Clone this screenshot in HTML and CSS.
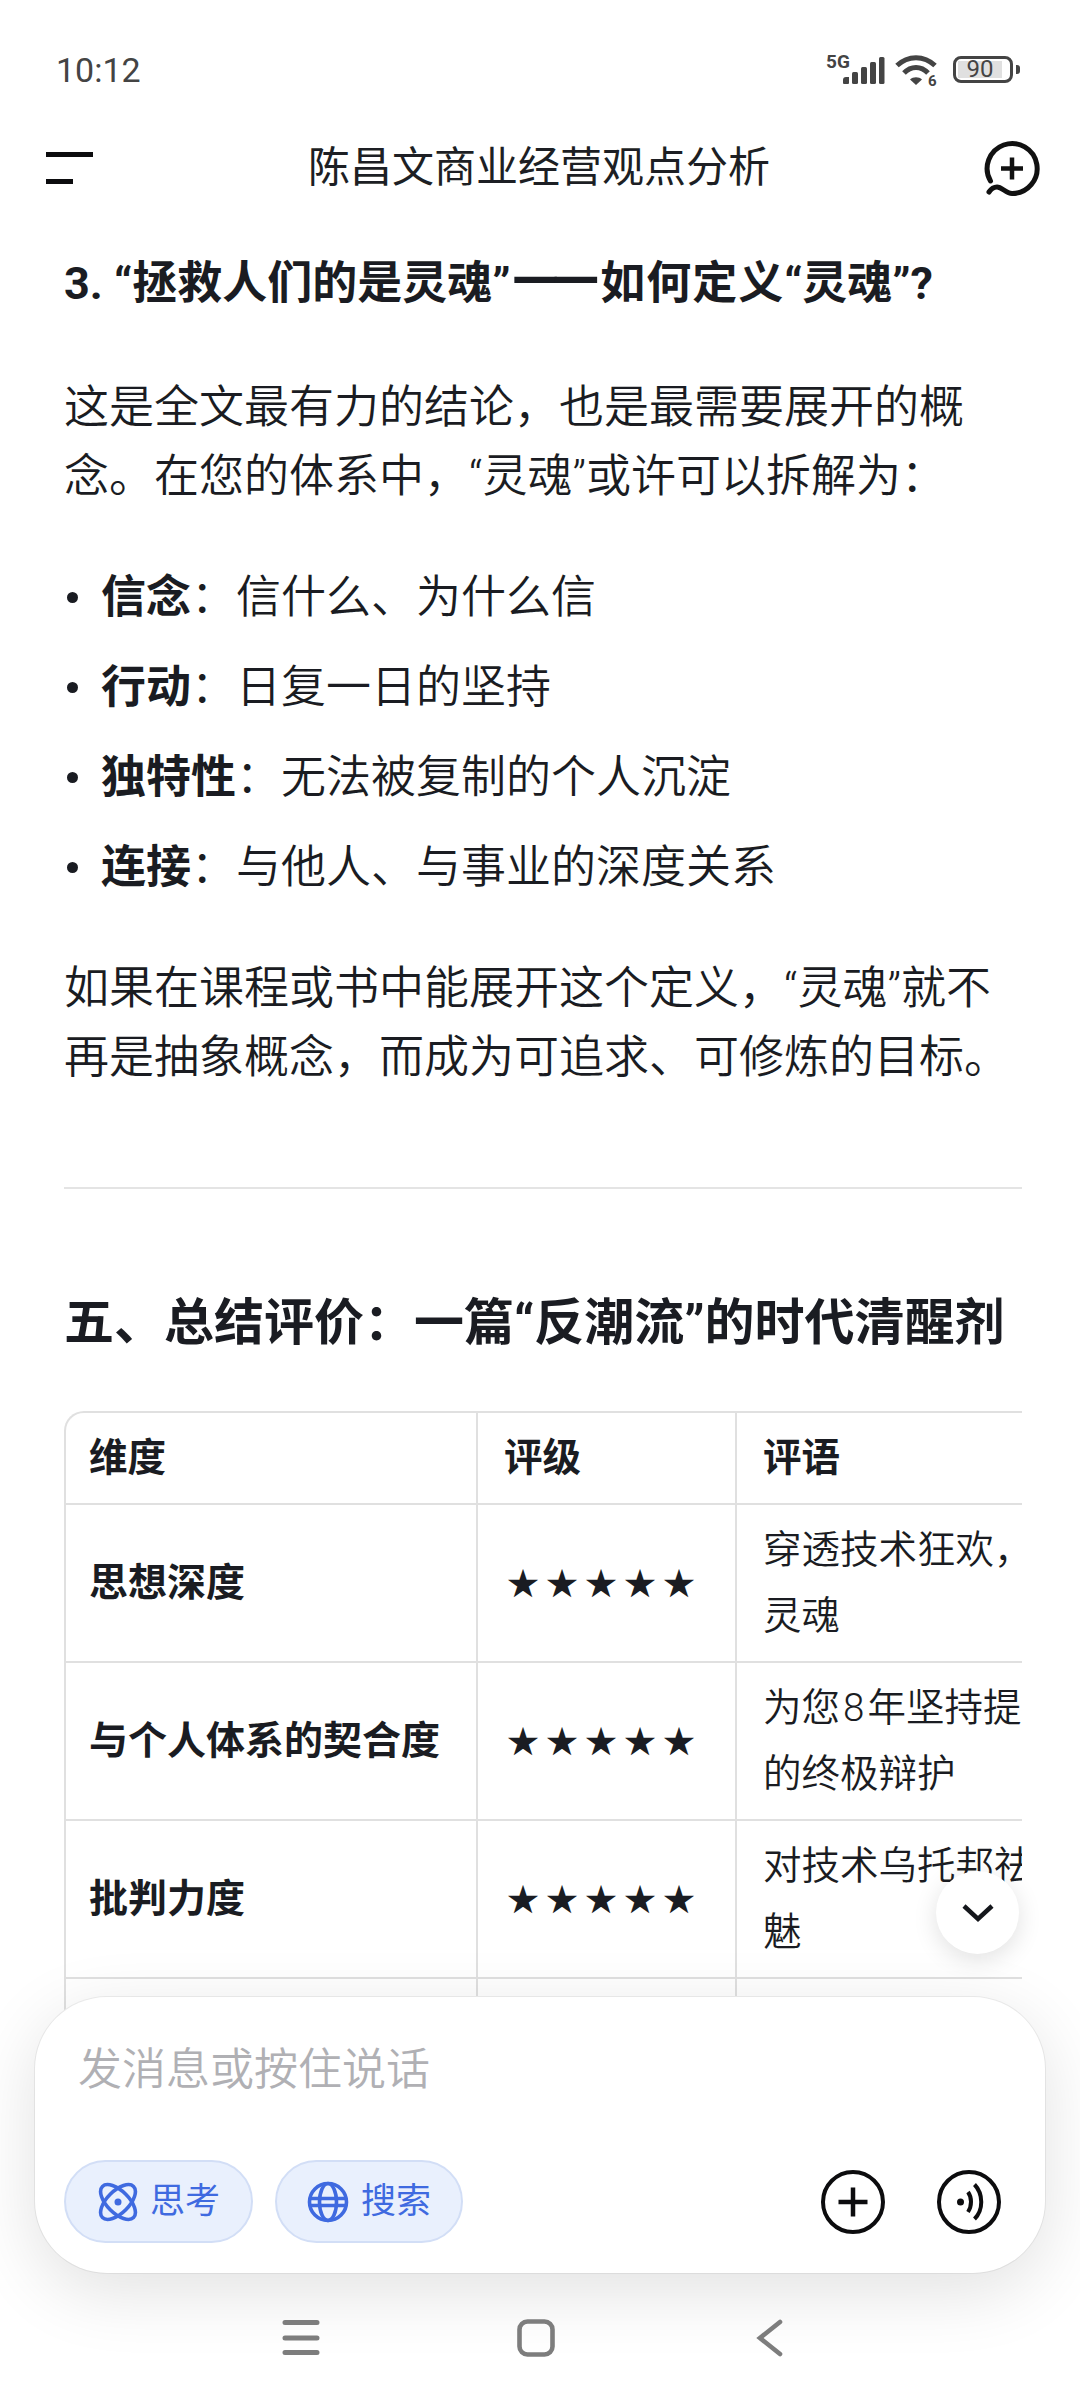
FILE: index.html
```html
<!DOCTYPE html>
<html lang="zh-CN">
<head>
<meta charset="utf-8">
<title>陈昌文商业经营观点分析</title>
<link rel="stylesheet" href="styles.css">
</head>
<body>
<div class="page">
  <div class="status">
    <span class="time">10:12</span>
    <div class="status-icons">
      <svg class="ic-net" width="60" height="34" viewBox="0 0 60 34">
        <text x="0" y="15" class="net-text">5G</text>
        <path d="M17 30l0-3a3 3 0 0 1 3-3h3v6a1 1 0 0 1-1 1h-4a1 1 0 0 1-1-1z" fill="#444"/>
        <rect x="26" y="19" width="6" height="12" rx="1.5" fill="#444"/>
        <rect x="35" y="14" width="6" height="17" rx="1.5" fill="#444"/>
        <rect x="44" y="9" width="6" height="22" rx="1.5" fill="#444"/>
        <rect x="53" y="4" width="5.5" height="27" rx="1.5" fill="#444"/>
      </svg>
      <svg class="ic-wifi" width="44" height="34" viewBox="0 0 44 34">
        <path d="M2 12.5C13 2 29 2 40 12.5" fill="none" stroke="#444" stroke-width="5"/>
        <path d="M9 20C16 12.5 26 12.5 33 20" fill="none" stroke="#444" stroke-width="5"/>
        <path d="M21 32l-6-5.500C18 23.500 24 23.500 27 26.500z" fill="#444"/>
        <text x="33" y="33" class="wifi-text">6</text>
      </svg>
      <div class="battery">
        <div class="battery-body"><span class="battery-fill">90</span></div>
        <span class="battery-nub"></span>
      </div>
    </div>
  </div>

  <header class="topbar">
    <div class="menu"><span class="menu-long"></span><span class="menu-short"></span></div>
    <div class="title">陈昌文商业经营观点分析</div>
    <svg class="newchat" width="60" height="60" viewBox="0 0 60 60">
      <path d="M8.500 43A25 25 0 1 1 30 55.500C24 55.500 20 49 15 49C11 49 9 51 7 54" fill="none" stroke="#111" stroke-width="5" stroke-linecap="round"/>
      <path d="M30 19.500V41.500M19 30.500H41" stroke="#111" stroke-width="4.500" fill="none"/>
    </svg>
  </header>

  <main class="content">
    <h3 class="h3">3. “拯救人们的是灵魂”<span class="dash">——</span><span class="tail">如何定义</span>“灵魂”?</h3>
    <p class="para first">这是全文最有力的结论，也是最需要展开的概念。在您的体系中，“灵魂”或许可以拆解为：</p>
    <ul class="list">
      <li class="item"><b>信念</b>：信什么、为什么信</li>
      <li class="item"><b>行动</b>：日复一日的坚持</li>
      <li class="item"><b>独特性</b>：无法被复制的个人沉淀</li>
      <li class="item"><b>连接</b>：与他人、与事业的深度关系</li>
    </ul>
    <p class="para">如果在课程或书中能展开这个定义，“灵魂”就不再是抽象概念，而成为可追求、可修炼的目标。</p>
    <hr class="rule">
    <h2 class="h2">五、总结评价：一篇“反潮流”的时代清醒剂</h2>
    <div class="table-wrap">
      <table class="table">
        <thead>
          <tr><th class="c1">维度</th><th class="c2">评级</th><th class="c3">评语</th></tr>
        </thead>
        <tbody>
          <tr><td class="c1 strong">思想深度</td><td class="c2 stars">★★★★★</td><td class="c3">穿透技术狂欢，<br>灵魂</td></tr>
          <tr><td class="c1 strong">与个人体系的契合度</td><td class="c2 stars">★★★★★</td><td class="c3">为您<span class="num">8</span>年坚持提<br>的终极辩护</td></tr>
          <tr><td class="c1 strong">批判力度</td><td class="c2 stars">★★★★★</td><td class="c3">对技术乌托邦祛<br>魅</td></tr>
          <tr><td class="c1 strong">&nbsp;</td><td class="c2">&nbsp;</td><td class="c3">&nbsp;<br>&nbsp;</td></tr>
        </tbody>
      </table>
    </div>
  </main>

  <button class="scroll-down" aria-label="向下滚动">
    <svg width="34" height="20" viewBox="0 0 34 20"><path d="M3 3L17 16L31 3" fill="none" stroke="#15171c" stroke-width="4.500"/></svg>
  </button>

  <section class="composer">
    <div class="placeholder">发消息或按住说话</div>
    <div class="actions">
      <div class="pill pill-think">
        <svg width="40" height="40" viewBox="0 0 40 40" fill="none" stroke="#3f6ae0" stroke-width="3.600">
          <ellipse cx="20" cy="20" rx="22" ry="11" transform="rotate(45 20 20)"/>
          <ellipse cx="20" cy="20" rx="22" ry="11" transform="rotate(-45 20 20)"/>
          <circle cx="20" cy="20" r="3.500" fill="#3f6ae0" stroke="none"/>
        </svg>
        <span>思考</span>
      </div>
      <div class="pill pill-search">
        <svg width="42" height="42" viewBox="0 0 42 42" fill="none" stroke="#3f6ae0" stroke-width="3.600">
          <circle cx="21" cy="21" r="18.500"/>
          <ellipse cx="21" cy="21" rx="8.500" ry="18.500"/>
          <path d="M3.500 17.500H38.500M3.500 24.500H38.500"/>
        </svg>
        <span>搜索</span>
      </div>
      <div class="round-btns">
        <svg width="66" height="66" viewBox="0 0 66 66" fill="none" stroke="#0c0c0e" stroke-width="4">
          <circle cx="33" cy="33" r="30"/>
          <path d="M33 18.500V47.500M18.500 33H47.500" stroke-width="4.500"/>
        </svg>
        <svg width="66" height="66" viewBox="0 0 66 66" fill="none" stroke="#0c0c0e" stroke-width="4">
          <circle cx="33" cy="33" r="30"/>
          <circle cx="24.500" cy="33" r="3.500" fill="#0c0c0e" stroke="none"/>
          <path d="M32 23C36 28.500 36 37 32 43" stroke-width="4"/>
          <path d="M38.500 15.500C47.500 25 47.500 41 38.500 50" stroke-width="4"/>
        </svg>
      </div>
    </div>
  </section>

  <nav class="navbar">
    <svg width="38" height="38" viewBox="0 0 38 38" fill="none" stroke="#7d7d7d" stroke-width="5" stroke-linecap="round">
      <path d="M3 3.500H35M3 19H35M3 33.500H35"/>
    </svg>
    <svg width="38" height="38" viewBox="0 0 38 38" fill="none" stroke="#7d7d7d" stroke-width="4.600">
      <rect x="2.500" y="2.500" width="33" height="33" rx="8"/>
    </svg>
    <svg width="38" height="38" viewBox="0 0 38 38" fill="none" stroke="#7d7d7d" stroke-width="4.600" stroke-linecap="round">
      <path d="M28 3L8 19L28 35"/>
    </svg>
  </nav>
</div>
</body>
</html>
```
FILE: styles.css
```css
* { box-sizing: border-box; }
html, body { margin: 0; padding: 0; background: #fff; }
body { font-family: Roboto, "Noto Sans CJK SC", sans-serif; color: #1a1c22; }
.page { position: relative; width: 1080px; height: 2400px; overflow: hidden; background: #fff; display: flex; flex-direction: column; }

.status { height: 112px; flex: none; display: flex; justify-content: space-between; padding: 48px 60px 0 56px; }
.time { font-size: 34px; line-height: 44px; color: #444; }
.status-icons { display: flex; align-items: flex-start; margin-top: 5px; gap: 9px; height: 34px; }
.net-text { font: 700 19px Roboto, sans-serif; fill: #444; }
.wifi-text { font: 700 15px Roboto, sans-serif; fill: #444; }
.battery { display: flex; align-items: center; gap: 3px; margin: 3px 0 0 5px; }
.battery-body { width: 60px; height: 27px; border: 3px solid #444; border-radius: 8px; padding: 2px; }
.battery-fill { display: block; width: 44px; height: 17px; background: #e0e0e0; font-size: 24px; line-height: 17px; color: #444; text-align: center; }
.battery-nub { width: 4px; height: 9px; background: #444; border-radius: 0 3px 3px 0; }

.topbar { height: 112px; flex: none; display: flex; align-items: center; justify-content: space-between; padding: 0 38px 0 46px; }
.menu { width: 47px; display: flex; flex-direction: column; gap: 22px; }
.menu-long { height: 5px; width: 47px; background: #0c0c0e; }
.menu-short { height: 5px; width: 27px; background: #0c0c0e; }
.title { font-size: 42px; line-height: 60px; font-weight: 400; color: #1d1f24; margin-left: 3px; }

.content { flex: none; padding: 25px 58px 0 64px; }
.h3 { margin: 0; font-size: 45px; line-height: 69px; font-weight: 700; }
.dash { font-size: 64px; font-weight: 500; line-height: 1; letter-spacing: -9px; margin-right: 9px; vertical-align: -4px; }
.tail { letter-spacing: 1px; }
.para { margin: 52px 0 0; font-size: 45px; line-height: 69px; font-weight: 350; color: #1a1c22; }
.para.first { margin-top: 55px; }
.list { list-style: none; margin: 52px 0 0; padding: 0; }
.item { position: relative; padding-left: 37px; font-size: 45px; line-height: 69px; margin-top: 21px; font-weight: 350; color: #1a1c22; }
.item:first-child { margin-top: 0; }
.item::before { content: ""; position: absolute; left: 3px; top: 29px; width: 11px; height: 11px; border-radius: 50%; background: #1a1c22; }
.item b { font-weight: 700; color: #1a1c22; }
.rule { margin: 95px 0 0; border: 0; height: 2px; background: #e4e4e4; }
.h2 { margin: 98px 0 0; font-size: 50px; line-height: 72px; font-weight: 700; white-space: nowrap; }

.table-wrap { margin-top: 52px; overflow: hidden; border: 2px solid #e0e0e0; border-width: 2px 0 0 2px; border-top-left-radius: 20px; height: 640px; }
.table { border-collapse: separate; border-spacing: 0; table-layout: fixed; width: 1100px; font-size: 38.500px; }
.c1 { width: 412px; }
.c2 { width: 259px; }
.c3 { width: 429px; }
.table th, .table td { padding: 0 0 0 26px; text-align: left; vertical-align: middle; border-right: 2px solid #e0e0e0; border-bottom: 2px solid #e0e0e0; white-space: nowrap; }
.table th.c1, .table td.c1 { padding-left: 23px; }
.table th { height: 92px; font-weight: 700; line-height: 60px; }
.table td { height: 158px; line-height: 66px; font-weight: 350; color: #1a1c22; }
.table td.strong { font-weight: 700; font-size: 39px; color: #1a1c22; }
.table td.stars { font-family: "Noto Sans CJK SC", sans-serif; font-size: 32px; letter-spacing: 7px; padding: 0 0 5px 29px; font-weight: 400; color: #1a1c22; }
.num { margin: 0 3px; }

.scroll-down { position: absolute; left: 936px; top: 1871px; width: 83px; height: 83px; padding: 0; border: 0; border-radius: 50%; background: #fff; box-shadow: 0 6px 24px rgba(0,0,0,.12); display: flex; align-items: center; justify-content: center; }

.composer { position: absolute; left: 35px; top: 1997px; width: 1010px; height: 276px; background: #fff; border-radius: 72px; box-shadow: 0 18px 70px rgba(0,0,0,.12), 0 0 0 1px #f0f0f0; padding: 46px 29px 30px 29px; display: flex; flex-direction: column; justify-content: space-between; }
.placeholder { font-size: 44px; line-height: 54px; font-weight: 350; color: #b0b0b4; padding-left: 14px; }
.actions { display: flex; align-items: center; gap: 22px; }
.pill { height: 83px; border-radius: 42px; background: #e9f0fd; border: 2px solid #d2def6; display: flex; align-items: center; gap: 12px; color: #3f6ae0; font-size: 35px; line-height: 44px; }
.pill-think { width: 189px; padding-left: 32px; }
.pill-search { width: 188px; padding-left: 30px; }
.round-btns { margin-left: auto; display: flex; gap: 50px; padding-right: 14px; }

.navbar { position: absolute; left: 282px; top: 2319px; height: 38px; display: flex; gap: 197px; }
```
